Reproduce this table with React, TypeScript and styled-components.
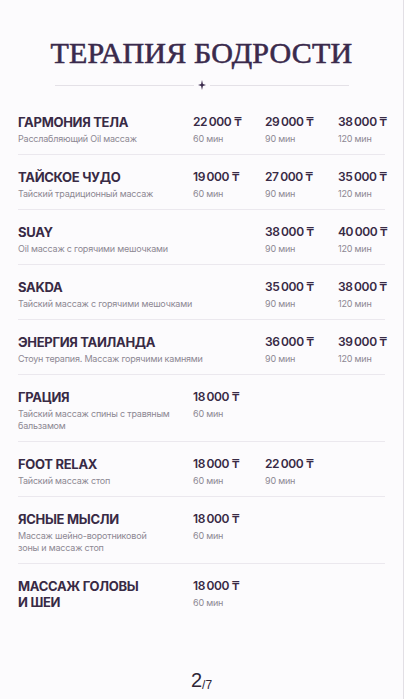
import React from 'react';
import styled, { createGlobalStyle } from 'styled-components';

const GlobalStyle = createGlobalStyle`
  html, body {
    margin: 0;
    padding: 0;
    background: #fcfbfd;
  }
  * { box-sizing: border-box; }
`;

const Page = styled.div`
  width: 404px;
  min-height: 699px;
  display: flex;
  flex-direction: column;
  padding: 0 18px;
  background: #fcfbfd;
  border-right: 1px solid #e2dfe5;
  font-family: Inter, "Noto Sans", "DejaVu Sans", sans-serif;
  color: #382a45;
`;

const Header = styled.header`
  padding-top: 35px;
  display: flex;
  flex-direction: column;
  align-items: center;
`;

const Title = styled.h1`
  margin: 0;
  font-family: "Liberation Serif", "DejaVu Serif", serif;
  font-weight: 400;
  font-size: 30px;
  line-height: 36px;
  letter-spacing: 0.2px;
  color: #3a2a4c;
  -webkit-text-stroke: 0.6px #3a2a4c;
`;

const Divider = styled.div`
  width: 294px;
  margin-top: 9px;
  display: flex;
  align-items: center;
  gap: 4px;
`;

const Rule = styled.div`
  flex: 1;
  height: 1px;
  background: #e4e1e7;
`;

const List = styled.div`
  margin-top: 10px;
  display: flex;
  flex-direction: column;
`;

const Row = styled.div<{ last?: boolean }>`
  display: grid;
  grid-template-columns: 175px 72px 73px 1fr;
  padding: 14px 0 9px;
  border-bottom: ${p => (p.last ? 'none' : '1px solid #ebe8ee')};
`;

const Info = styled.div<{ wide?: boolean }>`
  grid-column: ${p => (p.wide ? '1 / span 2' : '1')};
  grid-row: 1;
`;

const Name = styled.div`
  font-weight: 700;
  font-size: 13px;
  line-height: 16px;
  letter-spacing: -0.3px;
  white-space: pre-line;
  color: #382a45;
`;

const Sub = styled.div`
  margin-top: 3px;
  font-size: 9px;
  line-height: 12px;
  letter-spacing: -0.2px;
  white-space: pre-line;
  color: #8d8893;
`;

const Price = styled.div<{ col: number }>`
  grid-column: ${p => p.col};
  grid-row: 1;
`;

const Amount = styled.div`
  font-weight: 600;
  font-size: 12px;
  line-height: 16px;
  letter-spacing: -0.4px;
  color: #382a45;
  white-space: nowrap;
`;

const Duration = styled.div`
  margin-top: 3px;
  font-size: 9px;
  line-height: 12px;
  letter-spacing: -0.2px;
  color: #8d8893;
`;

const Footer = styled.footer`
  margin-top: auto;
  padding-bottom: 7px;
  display: flex;
  justify-content: center;
  align-items: baseline;
  font-family: "Liberation Sans", Arial, sans-serif;
  color: #2e2536;
`;

const PageNum = styled.span`
  font-size: 20px;
  line-height: 24px;
`;

const PageTotal = styled.span`
  font-size: 12px;
  position: relative;
  top: 2px;
`;

type Item = {
  name: string;
  sub?: string;
  prices: ([string, string] | null)[];
};

const items: Item[] = [
  { name: 'ГАРМОНИЯ ТЕЛА', sub: 'Расслабляющий Oil массаж', prices: [['22 000', '60'], ['29 000', '90'], ['38 000', '120']] },
  { name: 'ТАЙСКОЕ ЧУДО', sub: 'Тайский традиционный массаж', prices: [['19 000', '60'], ['27 000', '90'], ['35 000', '120']] },
  { name: 'SUAY', sub: 'Oil массаж с горячими мешочками', prices: [null, ['38 000', '90'], ['40 000', '120']] },
  { name: 'SAKDA', sub: 'Тайский массаж с горячими мешочками', prices: [null, ['35 000', '90'], ['38 000', '120']] },
  { name: 'ЭНЕРГИЯ ТАИЛАНДА', sub: 'Стоун терапия. Массаж горячими камнями', prices: [null, ['36 000', '90'], ['39 000', '120']] },
  { name: 'ГРАЦИЯ', sub: 'Тайский массаж спины с травяным\nбальзамом', prices: [['18 000', '60']] },
  { name: 'FOOT RELAX', sub: 'Тайский массаж стоп', prices: [['18 000', '60'], ['22 000', '90']] },
  { name: 'ЯСНЫЕ МЫСЛИ', sub: 'Массаж шейно-воротниковой\nзоны и массаж стоп', prices: [['18 000', '60']] },
  { name: 'МАССАЖ ГОЛОВЫ\nИ ШЕИ', prices: [['18 000', '60']] },
];

const Star = () => (
  <svg width="8" height="10" viewBox="0 0 8 10">
    <path d="M4 0 L4.9 4.1 L8 5 L4.9 5.9 L4 10 L3.1 5.9 L0 5 L3.1 4.1 Z" fill="#3a2a4c"/>
  </svg>
);

// "22 000" -> thin space between thousands, like the print menu
const fmt = (v: string) => v.replace(' ', '\u2009');

export default function App() {
  return <>
    <GlobalStyle/>
    <Page>
      <Header>
        <Title>ТЕРАПИЯ БОДРОСТИ</Title>
        <Divider>
          <Rule/>
          <Star/>
          <Rule/>
        </Divider>
      </Header>
      <List>
        {items.map((item, i) => (
          <Row key={item.name} last={i == items.length - 1}>
            <Info wide={item.prices[0] == null}>
              <Name>{item.name}</Name>
              {item.sub && <Sub>{item.sub}</Sub>}
            </Info>
            {item.prices.map((p, j) => p && (
              <Price key={j} col={j + 2}>
                <Amount>{fmt(p[0])} ₸</Amount>
                <Duration>{p[1]} мин</Duration>
              </Price>
            ))}
          </Row>
        ))}
      </List>
      <Footer>
        <PageNum>2</PageNum>
        <PageTotal>/7</PageTotal>
      </Footer>
    </Page>
  </>;
}
